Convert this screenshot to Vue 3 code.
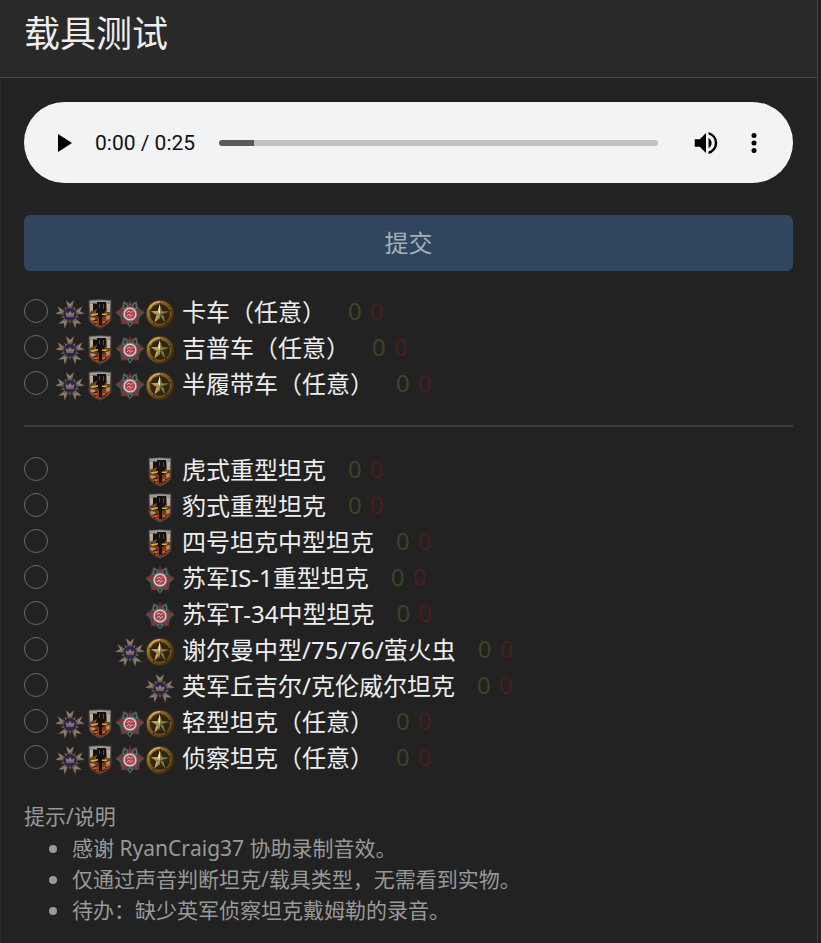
<script setup>
import { ref } from 'vue'

const ALL = ['uk', 'de', 'su', 'us']
const groups = [
  [
    { name: '卡车（任意）', sides: ALL },
    { name: '吉普车（任意）', sides: ALL },
    { name: '半履带车（任意）', sides: ALL },
  ],
  [
    { name: '虎式重型坦克', sides: ['de'] },
    { name: '豹式重型坦克', sides: ['de'] },
    { name: '四号坦克中型坦克', sides: ['de'] },
    { name: '苏军IS-1重型坦克', sides: ['su'] },
    { name: '苏军T-34中型坦克', sides: ['su'] },
    { name: '谢尔曼中型/75/76/萤火虫', sides: ['uk', 'us'] },
    { name: '英军丘吉尔/克伦威尔坦克', sides: ['uk'] },
    { name: '轻型坦克（任意）', sides: ALL },
    { name: '侦察坦克（任意）', sides: ALL },
  ],
]
const hints = [
  '感谢 RyanCraig37 协助录制音效。',
  '仅通过声音判断坦克/载具类型，无需看到实物。',
  '待办：缺少英军侦察坦克戴姆勒的录音。',
]
const choice = ref('')
const progress = ref(8)
</script>

<template>
  <svg class="sprites" aria-hidden="true">
    <defs>
      <linearGradient id="bronze" x1="0" y1="0" x2="1" y2="0">
        <stop offset="0" stop-color="#a39078" />
        <stop offset="0.5" stop-color="#5d4e40" />
        <stop offset="1" stop-color="#94836d" />
      </linearGradient>
      <radialGradient id="navy">
        <stop offset="0" stop-color="#323769" />
        <stop offset="1" stop-color="#1d2148" />
      </radialGradient>
      <linearGradient id="steel" x1="0" y1="0" x2="0" y2="1">
        <stop offset="0" stop-color="#8b8886" />
        <stop offset="0.3" stop-color="#6e5f52" />
        <stop offset="0.55" stop-color="#523722" />
        <stop offset="0.8" stop-color="#963f20" />
        <stop offset="1" stop-color="#503a30" />
      </linearGradient>
      <linearGradient id="gold" x1="0" y1="0" x2="1" y2="1">
        <stop offset="0" stop-color="#d3a849" />
        <stop offset="0.4" stop-color="#7c5a20" />
        <stop offset="1" stop-color="#2f1e09" />
      </linearGradient>
      <symbol id="badge-uk" viewBox="0 0 30 30">
        <g v-for="turn in 5" :key="turn" :transform="`rotate(${turn * 72} 15 15.5)`">
          <path d="M13 10 11 1l4 3.500L19 1l-2 9Z" fill="url(#bronze)" stroke="#3a3028" stroke-width="0.4" />
          <path d="m12 2.500 3 3 3-3-3 6Z" fill="#d8cab2" opacity="0.45" />
        </g>
        <g v-for="turn in 5" :key="'ray' + turn" :transform="`rotate(${turn * 72 + 36} 15 15.5)`">
          <path d="M13.500 10 15 6l1.500 4Z" fill="#796855" />
        </g>
        <circle cx="15" cy="15.500" r="6.300" fill="url(#navy)" stroke="#3b3a50" stroke-width="0.8" />
        <path d="m10.500 13 2.500 1.700 2-2.700 2 2.700 2.500-1.700-1 5h-7Z" fill="#9b7564" />
        <path d="M12 17h6" stroke="#5b3f48" stroke-width="0.8" />
      </symbol>
      <symbol id="badge-de" viewBox="0 0 30 30">
        <path d="M4 1.200Q15 .2 26 1.200V19c0 5-6.200 8-11 10.300C10.200 27 4 24 4 19Z" fill="url(#steel)" stroke="#4b4744" stroke-width="0.7" />
        <path d="M5 2q10-.8 20 0v2.500H5Z" fill="#aaa7a5" opacity="0.7" />
        <path d="M5 5h3v6l-3 2ZM22 5h3v8h-3ZM10 4h2v3h-2Z" fill="#d8c6ae" opacity="0.75" />
        <path d="M8 4.500h4V10l-4 2ZM12 3h9v9h-9ZM11 12l3-2h4l2 2-1 5-2 1v8h-3v-8l-3-2Z" fill="#15110f" />
        <path d="M14 5h1v4h-1ZM18 5h1v5h-1Z" fill="#534b48" />
        <path d="M5 15.500 13 14v1.500l-6 1.500ZM17 14.500h6L21 16h-4Z" fill="#ecab25" />
        <path d="m5.500 18 5 1-1 3-4-1ZM21 17l4-1-.500 4-3 1Z" fill="#c3a27a" opacity="0.85" />
        <path d="M7 23 13 21v5.500ZM17.500 20l5 1.500-5 5Z" fill="#b94b1c" />
        <path d="M8 22l5-1M18 21l4 2M9 25l4-1M17 26l4-2" stroke="#2b1a12" stroke-width="1" />
        <path d="m10 23 2 1M18 23l2-1" stroke="#ef7e2c" stroke-width="0.9" />
      </symbol>
      <symbol id="badge-su" viewBox="0 0 30 30">
        <path d="m15 5 6.500-3 2 6.500 6 5-4.500 4-1.500 7.500-5.500 0-3 3.500-3-3.500-5.500 0L5 17.500l-4.500-4 6-5 2-6.500Z" fill="#4b5651" stroke="#2d3733" stroke-width="0.7" />
        <path d="M9 3.500 13 7 8.500 10ZM21 3.500 17 7l4.500 3ZM3 13.500 7.500 11v5ZM27 13.500 22.500 11v5ZM8 20l4 2-4 2ZM22 20l-4 2 4 2ZM13 25l2-2.500 2 2.500-2 2.500Z" fill="#242e2b" stroke="#7c8780" stroke-width="0.7" />
        <path d="m15 .2 2 9.300 11.500 2.500-7 4.700 2.500 9L15 21l-9 4.700 2.500-9-7-4.700L13 9.500Z" fill="#8e353a" stroke="#50282b" stroke-width="0.5" />
        <circle cx="15" cy="15" r="6.800" fill="#c8cece" stroke="#7a8484" stroke-width="0.6" />
        <circle cx="15" cy="15" r="5.100" fill="#ad454f" />
        <path d="m12 13.500 2-1.500 1.500 1.500 2-1M12 17l2-2 1.500 2 2.500-1.500M14.500 18.500l1-1" fill="none" stroke="#e0aaaa" stroke-width="1" />
      </symbol>
      <symbol id="badge-us" viewBox="0 0 30 30">
        <circle cx="15" cy="15" r="13.800" fill="url(#gold)" stroke="#3e2b11" stroke-width="0.8" />
        <circle cx="15" cy="15" r="10.500" fill="#33240d" stroke="#8d6a2b" stroke-width="0.9" />
        <path d="M4.500 9A12 12 0 0 1 15 2.800" fill="none" stroke="#e6c679" stroke-width="1" />
        <path d="m15 4 2.400 7.800 8 .1-6.400 4.900 2.300 7.900-6.300-4.800-6.300 4.800L11 16.800l-6.400-4.900 8-.1Z" fill="#8c7c47" stroke="#1b140a" stroke-width="0.8" />
        <path d="M15 4.500v11.200l-2.200-3.700Z" fill="#f2e1a4" />
        <path d="M15 15.700 5.500 12.200l7.100-.1ZM15 15.700l-5.700 8L11 16.900Z" fill="#c5a860" />
        <path d="M15 15.700 24.500 12.200 19 16.700ZM15 15.700V20l5.500 4Z" fill="#343319" />
      </symbol>
    </defs>
  </svg>

  <main class="card">
    <header class="card-header">
      <h1>载具测试</h1>
    </header>
    <form class="card-body" @submit.prevent>
      <div class="player">
        <button type="button" class="icon-btn play" aria-label="播放">
          <svg viewBox="0 0 32 32"><path d="M9 7v18l14-9Z" /></svg>
        </button>
        <span class="time">0:00 / 0:25</span>
        <input v-model="progress" class="track" type="range" min="0" max="100" aria-label="播放进度" :style="{ '--played': progress + '%' }" />
        <button type="button" class="icon-btn" aria-label="音量">
          <svg viewBox="0 0 24 24"><path d="M3 9v6h4l5 5V4L7 9Zm13.500 3c0-1.770-1.020-3.290-2.500-4.030v8.050A4.500 4.500 0 0 0 16.500 12ZM14 3.230v2.060a7 7 0 0 1 0 13.420v2.060a9 9 0 0 0 0-17.540Z" /></svg>
        </button>
        <button type="button" class="icon-btn" aria-label="更多">
          <svg viewBox="0 0 24 24"><path d="M12 8a2 2 0 1 0 0-4 2 2 0 0 0 0 4Zm0 2a2 2 0 1 0 0 4 2 2 0 0 0 0-4Zm0 6a2 2 0 1 0 0 4 2 2 0 0 0 0-4Z" /></svg>
        </button>
      </div>

      <button type="submit" class="submit">提交</button>

      <template v-for="(group, g) in groups" :key="g">
        <hr v-if="g" />
        <label v-for="item in group" :key="item.name" class="row">
          <input v-model="choice" type="radio" name="vehicle" :value="item.name" />
          <span class="badges">
            <svg v-for="side in item.sides" :key="side" class="badge"><use :href="'#badge-' + side" /></svg>
          </span>
          <span class="name">{{ item.name }}</span>
          <span class="score"><span class="right">0</span><span class="wrong">0</span></span>
        </label>
      </template>

      <section class="hints">
        <p>提示/说明</p>
        <ul>
          <li v-for="hint in hints" :key="hint">{{ hint }}</li>
        </ul>
      </section>
    </form>
  </main>
</template>

<style>
body {
  margin: 0;
  background: #222;
}
</style>

<style scoped>
.sprites {
  position: absolute;
  width: 0;
  height: 0;
}
.card {
  margin-right: 3px;
  border: solid #444;
  border-width: 0 1px 0 0;
  box-shadow: inset 1px 0 #2b2b2b;
  color: #eee;
  font: 24px/36px "Noto Sans", "Noto Sans CJK SC", sans-serif;
  font-kerning: none;
}
.card-header {
  padding: 12px 24px 21px;
  background: #292929;
  border-bottom: 1px solid #484848;
}
h1 {
  margin: 0;
  font-size: 36px;
  line-height: 44px;
  font-weight: 400;
}
.card-body {
  padding: 24px 24px 16px;
}
.player {
  display: flex;
  align-items: center;
  box-sizing: border-box;
  height: 81px;
  padding: 0 23px 0 25px;
  border-radius: 41px;
  background: #f1f3f4;
  color: #111;
}
.icon-btn {
  display: flex;
  flex: none;
  justify-content: center;
  width: 32px;
  padding: 0;
  border: 0;
  background: none;
}
.icon-btn svg {
  width: 32px;
  height: 32px;
}
.icon-btn:not(.play) svg {
  width: 30px;
  height: 30px;
}
.icon-btn + .icon-btn {
  margin-left: 16px;
}
.time {
  margin: 0 24px 0 14px;
  font-family: Roboto, sans-serif;
  font-size: 21px;
  white-space: nowrap;
}
.track {
  flex: 1;
  min-width: 0;
  height: 6px;
  margin: 0 32px 0 0;
  appearance: none;
  border-radius: 3px;
  background: linear-gradient(#5a5a5a, #5a5a5a) 0 / var(--played) 100% no-repeat #c1c2c3;
}
.track::-webkit-slider-thumb {
  appearance: none;
  width: 0;
  height: 0;
}
.submit {
  display: block;
  width: 100%;
  height: 56px;
  margin: 32px 0 22px;
  border: 0;
  border-radius: 6px;
  background: #30465e;
  color: #a6afb8;
  font: inherit;
}
.row {
  display: flex;
  align-items: center;
  height: 36px;
}
.row input {
  appearance: none;
  box-sizing: border-box;
  flex: none;
  width: 24px;
  height: 24px;
  margin: 0;
  border: 1px solid #6a6a6a;
  border-radius: 50%;
}
.row input:checked {
  background: #375a7f;
}
.badges {
  display: flex;
  justify-content: flex-end;
  flex: none;
  width: 120px;
  margin: 5px 7px 0;
}
.badge {
  width: 30px;
  height: 30px;
}
.name {
  padding-top: 1px;
  white-space: nowrap;
}
.score {
  display: flex;
  gap: 8px;
  margin-left: 22px;
}
.right {
  color: #3b4524;
}
.wrong {
  color: #4a1d1d;
}
hr {
  height: 2px;
  margin: 24px 0;
  border: 0;
  background: #3c3c3c;
}
.hints {
  margin-top: 26px;
  color: #999;
  font-size: 21px;
  line-height: 31px;
}
.hints p {
  margin: 0;
}
.hints ul {
  margin: 1px 0 0;
  padding: 0 0 0 25px;
  list-style: none;
}
.hints li {
  display: flex;
  align-items: center;
  gap: 15px;
}
.hints li::before {
  content: "";
  flex: none;
  width: 8px;
  height: 8px;
  border-radius: 50%;
  background: currentColor;
}
</style>
